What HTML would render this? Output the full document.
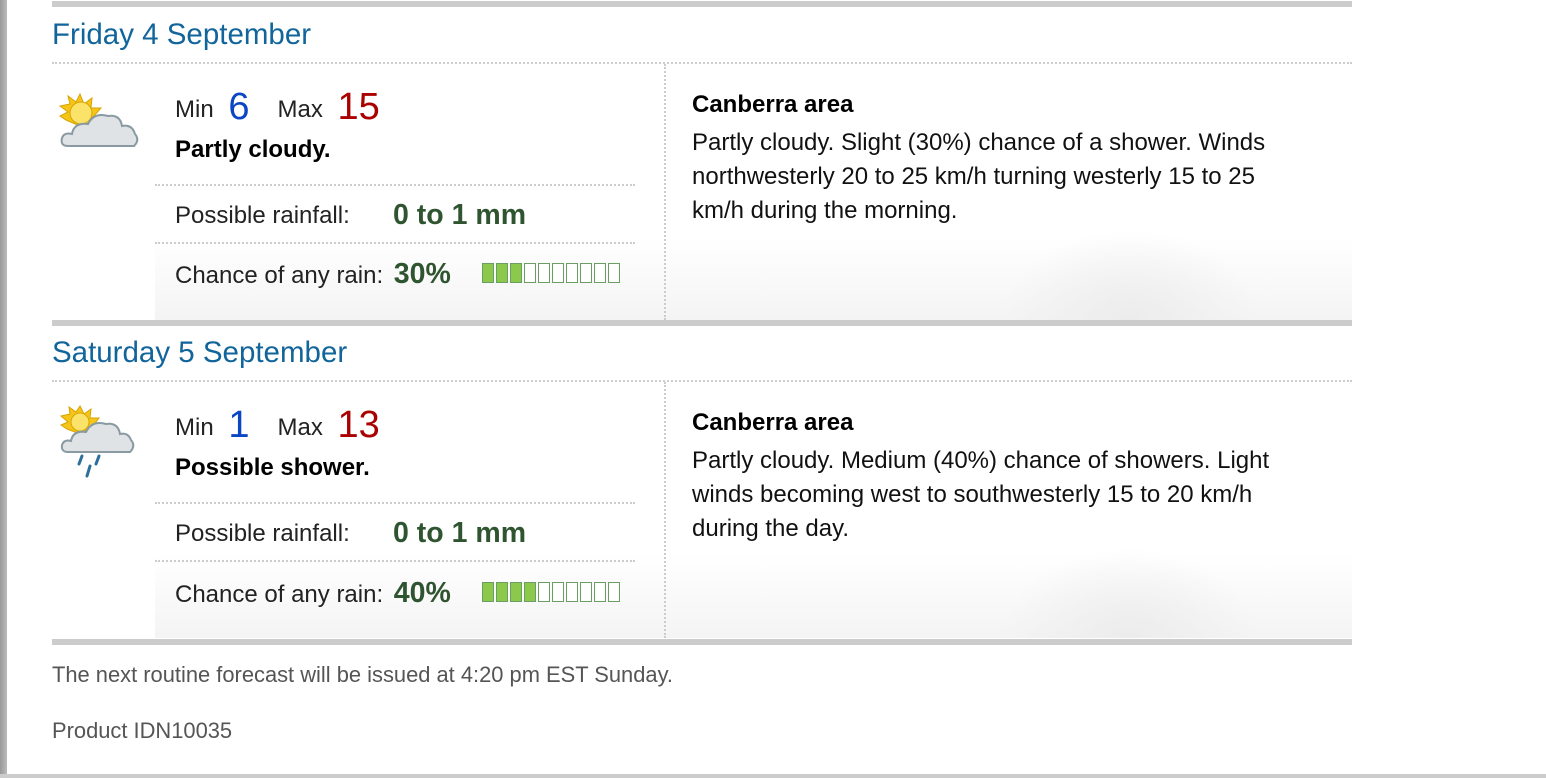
<!DOCTYPE html>
<html><head><meta charset="utf-8"><style>
body{margin:0;width:1546px;height:778px;background:#fff;position:relative;overflow:hidden;font-family:"Liberation Sans",Arial,sans-serif;}
.a{position:absolute;white-space:nowrap;line-height:34px;}
.bar{position:absolute;left:52px;width:1300px;height:6px;background:#ccc;}
.dot{position:absolute;left:52px;width:1300px;border-top:2px dotted #ccc;}
.dl{position:absolute;left:155px;width:480px;border-top:2px dotted #ccc;}
.vl{position:absolute;left:664px;border-left:2px dotted #ccc;}
.h{font-size:29.5px;color:#11659a;}
.t{font-size:24px;color:#222;}
.b{font-size:24px;font-weight:bold;color:#000;}
.g{font-weight:bold;color:#2f5530;font-size:28.5px;}
.shade{position:absolute;left:155px;width:1197px;background:linear-gradient(rgba(255,255,255,0) 40%,#f4f4f4);}
.rs{position:absolute;left:1000px;width:260px;height:90px;background:radial-gradient(ellipse at 50% 100%,#ececec,rgba(255,255,255,0) 70%);}
.rb{position:absolute;display:flex;gap:2px;}
.rb i{display:block;width:10px;height:18px;border:1px solid #6a9e63;background:#fff;}
.rb i.f{background:#8cc84b;}
</style></head><body>
<div style="position:absolute;left:0;top:0;width:7px;height:778px;background:linear-gradient(90deg,#999,#bbb)"></div>
<div style="position:absolute;left:0;top:774px;width:1546px;height:4px;background:#ccc"></div>

<div class="bar" style="top:1px"></div>
<div class="a h" style="left:52px;top:18px">Friday 4 September</div>
<div class="dot" style="top:62px"></div>
<div class="shade" style="top:180px;height:140px"></div>
<div class="rs" style="top:230px"></div>
<div class="vl" style="top:64px;height:256px"></div>
<svg style="position:absolute;left:56px;top:92px" width="84" height="60" viewBox="0 0 84 60">
<g fill="#f5c518" stroke="#d9a400"><polygon points="24,2 28,12 36,6 35,16 45,16 38,24 24,34 10,28 4,24 12,20 4,14 14,12 12,4 20,10"/></g>
<circle cx="25" cy="21" r="11" fill="#fbe36a" stroke="#d9a400"/>
<path d="M12 54 Q4 54 6 46 Q8 40 16 42 Q18 30 32 32 Q38 20 52 24 Q64 22 66 34 Q76 32 79 42 Q84 48 78 54 Z" fill="#dfe3e6" stroke="#8a9aa3" stroke-width="2"/>
</svg>
<div class="a t" style="left:175px;top:90px">Min <span style="font-size:38px;color:#0b46c4;margin:0 28px 0 8px;vertical-align:-2px">6</span>Max <span style="font-size:38px;color:#a00;margin-left:8px;vertical-align:-2px">15</span></div>
<div class="a b" style="left:175px;top:133px">Partly cloudy.</div>
<div class="dl" style="top:184px"></div>
<div class="a t" style="left:175px;top:199px">Possible rainfall:</div>
<div class="a g" style="left:393px;top:198px">0 to 1 mm</div>
<div class="dl" style="top:242px"></div>
<div class="a t" style="left:175px;top:257px">Chance of any rain: <span class="g" style="margin-left:4px">30%</span></div>
<div class="rb" style="left:482px;top:263px"><i class="f"></i><i class="f"></i><i class="f"></i><i></i><i></i><i></i><i></i><i></i><i></i><i></i></div>
<div class="a b" style="left:692px;top:88px">Canberra area</div>
<div class="a t" style="left:692px;top:126px;color:#111;white-space:normal;width:640px">Partly cloudy. Slight (30%) chance of a shower. Winds<br>northwesterly 20 to 25 km/h turning westerly 15 to 25<br>km/h during the morning.</div>

<div class="bar" style="top:320px"></div>
<div class="a h" style="left:52px;top:336px">Saturday 5 September</div>
<div class="dot" style="top:380px"></div>
<div class="shade" style="top:498px;height:140px"></div>
<div class="rs" style="top:548px"></div>
<div class="vl" style="top:382px;height:256px"></div>
<svg style="position:absolute;left:58px;top:404px" width="80" height="76" viewBox="0 0 80 76">
<g fill="#f5c518" stroke="#d9a400"><polygon points="22,2 26,10 33,5 32,14 41,14 35,22 22,30 9,25 3,21 10,18 3,12 12,10 11,3 18,8"/></g>
<circle cx="22" cy="18" r="9" fill="#fbe36a" stroke="#d9a400"/>
<path d="M10 48 Q3 48 4 41 Q6 35 13 37 Q15 26 28 28 Q34 16 48 20 Q60 18 62 30 Q70 28 73 36 Q78 42 72 48 Z" fill="#dfe3e6" stroke="#8a9aa3" stroke-width="2"/>
<path d="M24 52 l-3 8 M41 52 l-3 8 M32 62 l-3 10" stroke="#2d6f9a" stroke-width="3" stroke-linecap="round"/>
</svg>
<div class="a t" style="left:175px;top:408px">Min <span style="font-size:38px;color:#0b46c4;margin:0 28px 0 8px;vertical-align:-2px">1</span>Max <span style="font-size:38px;color:#a00;margin-left:8px;vertical-align:-2px">13</span></div>
<div class="a b" style="left:175px;top:451px">Possible shower.</div>
<div class="dl" style="top:502px"></div>
<div class="a t" style="left:175px;top:517px">Possible rainfall:</div>
<div class="a g" style="left:393px;top:516px">0 to 1 mm</div>
<div class="dl" style="top:560px"></div>
<div class="a t" style="left:175px;top:576px">Chance of any rain: <span class="g" style="margin-left:4px">40%</span></div>
<div class="rb" style="left:482px;top:582px"><i class="f"></i><i class="f"></i><i class="f"></i><i class="f"></i><i></i><i></i><i></i><i></i><i></i><i></i></div>
<div class="a b" style="left:692px;top:406px">Canberra area</div>
<div class="a t" style="left:692px;top:444px;color:#111;white-space:normal;width:640px">Partly cloudy. Medium (40%) chance of showers. Light<br>winds becoming west to southwesterly 15 to 20 km/h<br>during the day.</div>

<div class="bar" style="top:639px"></div>
<div class="a" style="left:52px;top:658px;font-size:21.9px;color:#555">The next routine forecast will be issued at 4:20 pm EST Sunday.</div>
<div class="a" style="left:52px;top:714px;font-size:21.9px;color:#555">Product IDN10035</div>
</body></html>
